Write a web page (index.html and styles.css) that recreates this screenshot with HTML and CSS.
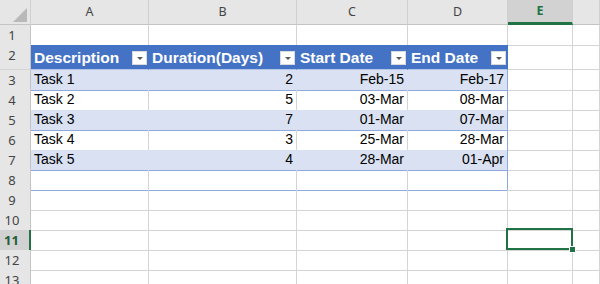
FILE: index.html
```html
<!DOCTYPE html>
<html lang="en">
<head>
    <meta charset="UTF-8">
    <meta name="viewport" content="width=device-width, initial-scale=1.0">
    <title>Task Schedule</title>
    <link rel="stylesheet" href="styles.css">
</head>
<body>
    <div class="sheet">
        <!-- Column headers -->
        <div class="row col-heads">
            <div class="corner">
                <svg width="30" height="24" viewBox="0 0 30 24"><polygon points="13,22 27,22 27,8" fill="#b9b9b9"/></svg>
            </div>
            <div class="col-head">A</div>
            <div class="col-head">B</div>
            <div class="col-head">C</div>
            <div class="col-head">D</div>
            <div class="col-head active">E</div>
            <div class="col-head"></div>
        </div>

        <div class="row">
            <div class="row-head">1</div>
            <div class="cell"></div><div class="cell"></div><div class="cell"></div><div class="cell"></div><div class="cell"></div><div class="cell"></div>
        </div>

        <!-- Table header -->
        <div class="row thead">
            <div class="row-head">2</div>
            <div class="cell t"><span>Description</span><span class="filter"></span></div>
            <div class="cell t"><span>Duration(Days)</span><span class="filter"></span></div>
            <div class="cell t"><span>Start Date</span><span class="filter"></span></div>
            <div class="cell t last"><span>End Date</span><span class="filter"></span></div>
            <div class="cell"></div><div class="cell"></div>
        </div>

        <div class="row band">
            <div class="row-head">3</div>
            <div class="cell t">Task 1</div>
            <div class="cell t num">2</div>
            <div class="cell t num">Feb-15</div>
            <div class="cell t num last">Feb-17</div>
            <div class="cell"></div><div class="cell"></div>
        </div>
        <div class="row plain">
            <div class="row-head">4</div>
            <div class="cell t">Task 2</div>
            <div class="cell t num">5</div>
            <div class="cell t num">03-Mar</div>
            <div class="cell t num last">08-Mar</div>
            <div class="cell"></div><div class="cell"></div>
        </div>
        <div class="row band">
            <div class="row-head">5</div>
            <div class="cell t">Task 3</div>
            <div class="cell t num">7</div>
            <div class="cell t num">01-Mar</div>
            <div class="cell t num last">07-Mar</div>
            <div class="cell"></div><div class="cell"></div>
        </div>
        <div class="row plain">
            <div class="row-head">6</div>
            <div class="cell t">Task 4</div>
            <div class="cell t num">3</div>
            <div class="cell t num">25-Mar</div>
            <div class="cell t num last">28-Mar</div>
            <div class="cell"></div><div class="cell"></div>
        </div>
        <div class="row band">
            <div class="row-head">7</div>
            <div class="cell t">Task 5</div>
            <div class="cell t num">4</div>
            <div class="cell t num">28-Mar</div>
            <div class="cell t num last">01-Apr</div>
            <div class="cell"></div><div class="cell"></div>
        </div>
        <div class="row plain">
            <div class="row-head">8</div>
            <div class="cell t"></div><div class="cell t"></div><div class="cell t"></div><div class="cell t last"></div>
            <div class="cell"></div><div class="cell"></div>
        </div>

        <!-- Empty rows -->
        <div class="row">
            <div class="row-head">9</div>
            <div class="cell"></div><div class="cell"></div><div class="cell"></div><div class="cell"></div><div class="cell"></div><div class="cell"></div>
        </div>
        <div class="row">
            <div class="row-head">10</div>
            <div class="cell"></div><div class="cell"></div><div class="cell"></div><div class="cell"></div><div class="cell"></div><div class="cell"></div>
        </div>
        <div class="row">
            <div class="row-head active">11</div>
            <div class="cell"></div><div class="cell"></div><div class="cell"></div><div class="cell"></div><div class="cell"></div><div class="cell"></div>
        </div>
        <div class="row">
            <div class="row-head">12</div>
            <div class="cell"></div><div class="cell"></div><div class="cell"></div><div class="cell"></div><div class="cell"></div><div class="cell"></div>
        </div>
        <div class="row">
            <div class="row-head">13</div>
            <div class="cell"></div><div class="cell"></div><div class="cell"></div><div class="cell"></div><div class="cell"></div><div class="cell"></div>
        </div>

        <!-- Active cell E11 -->
        <div class="selection"><span class="handle"></span></div>
    </div>
</body>
</html>
```

FILE: styles.css
```css
/* General Styles */
body {
    margin: 0;
    padding: 0;
    background-color: #ffffff;
    font-family: "Liberation Sans Narrow", "Liberation Sans", Arial, sans-serif;
    color: #000000;
    overflow: hidden;
}

/* Sheet grid */
.sheet {
    position: relative;
    width: 600px;
    height: 284px;
    overflow: hidden;
}

.row {
    display: grid;
    grid-template-columns: 31px 118px 148px 111px 100px 65px 1fr;
    height: 20px;
}

.row > div {
    box-sizing: border-box;
    border-right: 1px solid #d4d4d4;
    border-bottom: 1px solid #d4d4d4;
}

/* Column headers */
.col-heads {
    height: 25px;
}

.col-heads > div {
    background-color: #e6e6e6;
    border-right-color: #d0d0d0;
    border-bottom-color: #c4c4c4;
}

.corner svg {
    display: block;
}

.col-head {
    font-family: "Noto Sans", "Open Sans", sans-serif;
    font-size: 12.5px;
    color: #444444;
    text-align: center;
    line-height: 24px;
}

.col-head.active {
    background-color: #d2d2d2;
    color: #217346;
    font-weight: bold;
    border-bottom: 3px solid #217346;
    line-height: 22px;
}

/* Row headers */
.row-head {
    background-color: #e6e6e6;
    font-family: "Noto Sans", "Open Sans", sans-serif;
    font-size: 13px;
    color: #444444;
    text-align: center;
    padding-right: 6px;
    line-height: 20px;
    border-right-color: #c4c4c4 !important;
}

.row-head.active {
    background-color: #d2d2d2;
    color: #1f5e3c;
    font-weight: bold;
    border-right: 2px solid #217346 !important;
}

/* Cells */
.cell {
    font-size: 14px;
    line-height: 19px;
    padding: 0 3px;
    white-space: nowrap;
    overflow: hidden;
}

.cell.num {
    text-align: right;
    padding-right: 3px;
}

/* Table styles */
.thead {
    height: 25px;
}

.thead .t {
    background-color: #4472c4;
    border-right-color: #4472c4;
    border-bottom-color: #b4c6e7;
    color: #ffffff;
    font-weight: bold;
    font-size: 15.5px;
    display: flex;
    justify-content: space-between;
    align-items: center;
    padding: 2px 1px 0 3px;
    line-height: 22px;
}

.filter {
    position: relative;
    width: 15px;
    height: 14px;
    box-sizing: border-box;
    background-color: #ffffff;
    border: 1px solid #dadada;
}

.filter::after {
    content: "";
    position: absolute;
    left: 4px;
    top: 5px;
    border-left: 3px solid transparent;
    border-right: 3px solid transparent;
    border-top: 3px solid #595959;
}

.band .t {
    background-color: #d9e1f2;
    border-right-color: #d9e1f2;
    border-bottom-color: #8ea9db;
}

.plain .t {
    border-bottom-color: #8ea9db;
}

.band .t.last,
.plain .t.last {
    border-right-color: #8ea9db;
}

/* Selected cell */
.selection {
    position: absolute;
    left: 506px;
    top: 228px;
    width: 67px;
    height: 22px;
    box-sizing: border-box;
    border: 2px solid #217346;
}

.handle {
    position: absolute;
    right: -5px;
    bottom: -5px;
    width: 5px;
    height: 5px;
    background-color: #217346;
    border: 1px solid #ffffff;
}
```
